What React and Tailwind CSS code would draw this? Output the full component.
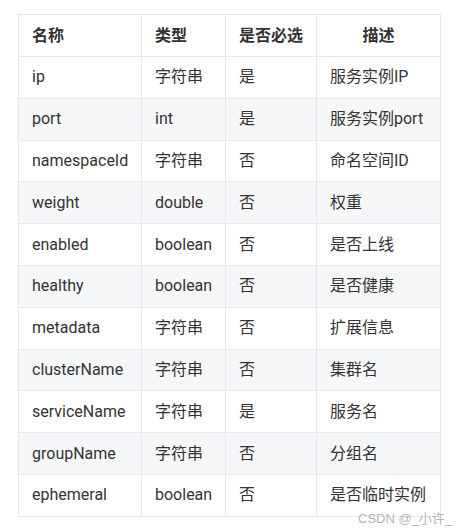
const rows = [
  ['ip', '字符串', '是', '服务实例IP'],
  ['port', 'int', '是', '服务实例port'],
  ['namespaceId', '字符串', '否', '命名空间ID'],
  ['weight', 'double', '否', '权重'],
  ['enabled', 'boolean', '否', '是否上线'],
  ['healthy', 'boolean', '否', '是否健康'],
  ['metadata', '字符串', '否', '扩展信息'],
  ['clusterName', '字符串', '否', '集群名'],
  ['serviceName', '字符串', '是', '服务名'],
  ['groupName', '字符串', '否', '分组名'],
  ['ephemeral', 'boolean', '否', '是否临时实例'],
];

export default function App() {
  return (
    <div
      className="relative w-[465px] h-[531px] bg-white pt-[14px] pl-[18px] text-[#333333]"
      style={{ fontFamily: 'Roboto, "Noto Sans CJK SC", sans-serif' }}
    >
      <table className="border-collapse table-fixed w-[422px] text-[16px]">
        <colgroup>
          <col className="w-[123px]" />
          <col className="w-[84px]" />
          <col className="w-[91px]" />
          <col className="w-[124px]" />
        </colgroup>
        <thead>
          <tr className="h-[42px]">
            <th className="border border-[#e6e8eb] px-[13px] text-left font-bold">名称</th>
            <th className="border border-[#e6e8eb] px-[13px] text-left font-bold">类型</th>
            <th className="border border-[#e6e8eb] px-[13px] text-left font-bold">是否必选</th>
            <th className="border border-[#e6e8eb] px-[13px] text-center font-bold">描述</th>
          </tr>
        </thead>
        <tbody>
          {rows.map((r, i) => (
            <tr key={r[0]} className={`h-[41.8px] ${i % 2 === 1 ? 'bg-[#f6f7f9]' : 'bg-white'}`}>
              {r.map((c, j) => (
                <td key={j} className="border border-[#e6e8eb] px-[13px] whitespace-nowrap">
                  {c}
                </td>
              ))}
            </tr>
          ))}
        </tbody>
      </table>
      <div
        className="absolute left-[358px] top-[509px] text-[13px] text-[#b4b4b4]"
        style={{ fontFamily: '"Liberation Sans", "Noto Sans CJK SC", sans-serif' }}
      >
        CSDN @_小许_
      </div>
    </div>
  );
}
